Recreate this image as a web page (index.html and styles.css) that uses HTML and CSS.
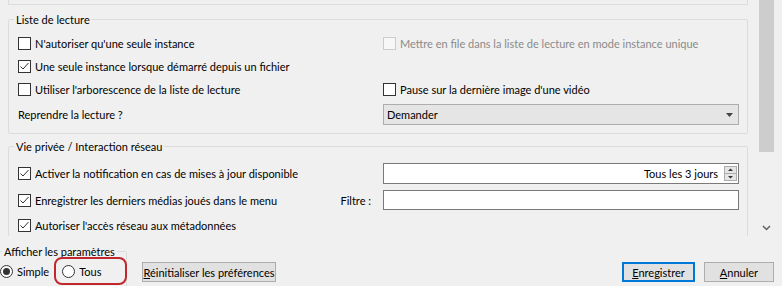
FILE: index.html
```html
<!DOCTYPE html>
<html lang="fr">
<head>
<meta charset="utf-8">
<title>Préférences</title>
<link rel="stylesheet" href="styles.css">
</head>
<body>
<div class="window">
  <div class="scrollarea">
    <div class="viewport">
      <div class="prev-group"></div>
      <fieldset class="group group-playlist">
        <legend>Liste de lecture</legend>
        <div class="grid grid-playlist">
          <label class="check"><span class="box"></span><span>N'autoriser qu'une seule instance</span></label>
          <label class="check disabled"><span class="box"></span><span>Mettre en file dans la liste de lecture en mode instance unique</span></label>
          <label class="check checked"><span class="box"><svg width="11" height="11" viewBox="0 0 11 11"><path d="M1.5 5.5 L4 8 L9.5 2" fill="none" stroke="#333" stroke-width="1"/></svg></span><span>Une seule instance lorsque démarré depuis un fichier</span></label>
          <span class="empty"></span>
          <label class="check"><span class="box"></span><span>Utiliser l'arborescence de la liste de lecture</span></label>
          <label class="check"><span class="box"></span><span>Pause sur la dernière image d'une vidéo</span></label>
          <span class="label">Reprendre la lecture ?</span>
          <div class="combo"><span>Demander</span><svg width="7" height="4" viewBox="0 0 7 4"><path d="M0 0 H7 L3.5 4 Z" fill="#444"/></svg></div>
        </div>
      </fieldset>
      <fieldset class="group group-privacy">
        <legend>Vie privée / Interaction réseau</legend>
        <div class="grid grid-privacy">
          <label class="check checked"><span class="box"><svg width="11" height="11" viewBox="0 0 11 11"><path d="M1.5 5.5 L4 8 L9.5 2" fill="none" stroke="#333" stroke-width="1"/></svg></span><span>Activer la notification en cas de mises à jour disponible</span></label>
          <div class="spinbox"><span class="spin-value">Tous les 3 jours</span><svg class="spin-buttons" width="13" height="15" viewBox="0 0 13 15"><rect x="0.5" y="0.5" width="12" height="14" fill="#e5e5e5" stroke="#adadad"/><line x1="1" y1="7.5" x2="12" y2="7.5" stroke="#adadad"/><path d="M4 5 H9 L6.5 2.5 Z" fill="#333"/><path d="M4 10 H9 L6.5 12.5 Z" fill="#333"/></svg></div>
          <div class="split">
            <label class="check checked"><span class="box"><svg width="11" height="11" viewBox="0 0 11 11"><path d="M1.5 5.5 L4 8 L9.5 2" fill="none" stroke="#333" stroke-width="1"/></svg></span><span>Enregistrer les derniers médias joués dans le menu</span></label>
            <span class="label filter-label">Filtre :</span>
          </div>
          <div class="input"></div>
          <label class="check checked"><span class="box"><svg width="11" height="11" viewBox="0 0 11 11"><path d="M1.5 5.5 L4 8 L9.5 2" fill="none" stroke="#333" stroke-width="1"/></svg></span><span>Autoriser l'accès réseau aux métadonnées</span></label>
        </div>
      </fieldset>
    </div>
    <div class="scrollbar">
      <div class="thumb"></div>
      <div class="scroll-down"><svg width="9" height="6" viewBox="0 0 9 6"><polyline points="1,1 4.5,4.5 8,1" fill="none" stroke="#606060" stroke-width="1.5"/></svg></div>
    </div>
  </div>
  <div class="footer">
    <fieldset class="display-group">
      <legend>Afficher les paramètres</legend>
      <div class="radios">
        <label class="radio selected"><span class="circle"><span class="dot"></span></span><span>Simple</span></label>
        <label class="radio"><span class="circle"></span><span>Tous</span></label>
      </div>
    </fieldset>
    <button class="btn btn-reset"><u>R</u>éinitialiser les préférences</button>
    <div class="spacer"></div>
    <button class="btn btn-default"><u>E</u>nregistrer</button>
    <button class="btn btn-cancel"><u>A</u>nnuler</button>
    <div class="highlight"></div>
  </div>
</div>
</body>
</html>
```

FILE: styles.css
```css
* { box-sizing: border-box; }
html, body { margin: 0; padding: 0; }
body {
  width: 782px;
  height: 286px;
  overflow: hidden;
  background: #f0f0f0;
  font-family: Lato, "Noto Sans", sans-serif;
  font-size: 11px;
  color: #000;
}
.window { display: flex; flex-direction: column; height: 286px; }

.scrollarea { display: flex; height: 236px; }
.viewport { flex: 1; overflow: hidden; padding: 0 10px 0 8px; }
.scrollbar {
  flex: none;
  width: 17px;
  margin-right: 7px;
  display: flex;
  flex-direction: column;
  justify-content: space-between;
}
.thumb { height: 152px; margin: 0 1px; background: #cdcdcd; }
.scroll-down { height: 17px; display: flex; align-items: center; justify-content: center; }

.prev-group {
  height: 5px;
  border: 1px solid #dcdcdc;
  border-top: none;
}

.group {
  margin: 6px 0 0;
  padding: 7px 8px 8px 9px;
  border: 1px solid #dcdcdc;
  border-radius: 2px;
  min-width: 0;
}
.group legend, .display-group legend {
  padding: 0 2px;
  margin-left: -4px;
  line-height: 17px;
  height: 17px;
}
.group-privacy { margin-top: 4px; padding-top: 8px; padding-bottom: 20px; }

.grid {
  display: grid;
  grid-template-columns: 1fr 356px;
  column-gap: 10px;
  row-gap: 6px;
}
.grid-playlist { grid-template-rows: 17px 17px 17px 21px; }
.grid-privacy { grid-template-rows: 21px 21px 17px; }

.check {
  display: flex;
  align-items: center;
  gap: 4px;
  white-space: nowrap;
}
.box {
  flex: none;
  width: 13px;
  height: 13px;
  border: 1px solid #333;
  background: #fff;
  display: flex;
  align-items: center;
  justify-content: center;
}
.check.disabled { color: #8a8a8a; }
.check.disabled .box { border-color: #cccccc; background: #f7f7f7; }

.label { display: flex; align-items: center; white-space: nowrap; }

.combo {
  height: 21px;
  border: 1px solid #adadad;
  background: #e5e5e5;
  display: flex;
  align-items: center;
  justify-content: space-between;
  padding: 0 5px 0 3px;
}

.spinbox {
  height: 21px;
  border: 1px solid #7a7a7a;
  background: #fff;
  display: flex;
  align-items: center;
  justify-content: flex-end;
  gap: 6px;
  padding-right: 1px;
}
.spin-buttons { display: block; }

.split {
  display: flex;
  align-items: center;
  justify-content: space-between;
  padding-right: 2px;
}
.input {
  height: 20px;
  border: 1px solid #7a7a7a;
  background: #fff;
}

.footer {
  position: relative;
  display: flex;
  align-items: flex-start;
  height: 50px;
}
.display-group {
  flex: none;
  width: 133px;
  margin: 7px 0 0 -6px;
  padding: 3px 6px 20px 5px;
  border: 1px solid #dcdcdc;
  border-radius: 2px;
  min-width: 0;
}
.display-group legend { margin-left: 2px; }
.radios { display: flex; gap: 13px; height: 16px; align-items: center; }
.radio { display: flex; align-items: center; gap: 4px; white-space: nowrap; }
.circle {
  flex: none;
  width: 13px;
  height: 13px;
  border: 1px solid #333;
  border-radius: 50%;
  background: #fff;
  display: flex;
  align-items: center;
  justify-content: center;
}
.dot { width: 7px; height: 7px; border-radius: 50%; background: #333; }

.btn {
  flex: none;
  margin-top: 26px;
  height: 20px;
  padding: 0;
  border: 1px solid #adadad;
  background: #e1e1e1;
  font: inherit;
  color: #000;
  text-align: center;
  white-space: nowrap;
}
.btn-reset { width: 134px; margin-left: 15px; }
.spacer { flex: 1; }
.btn-default {
  width: 73px;
  border-color: #0078d7;
  box-shadow: inset 0 0 0 1px #0078d7;
}
.btn-cancel { width: 70px; margin-left: 9px; margin-right: 8px; }

.highlight {
  position: absolute;
  left: 54px;
  top: 21px;
  width: 73px;
  height: 28px;
  border: 2px solid #c0282d;
  border-radius: 8px;
}
```
